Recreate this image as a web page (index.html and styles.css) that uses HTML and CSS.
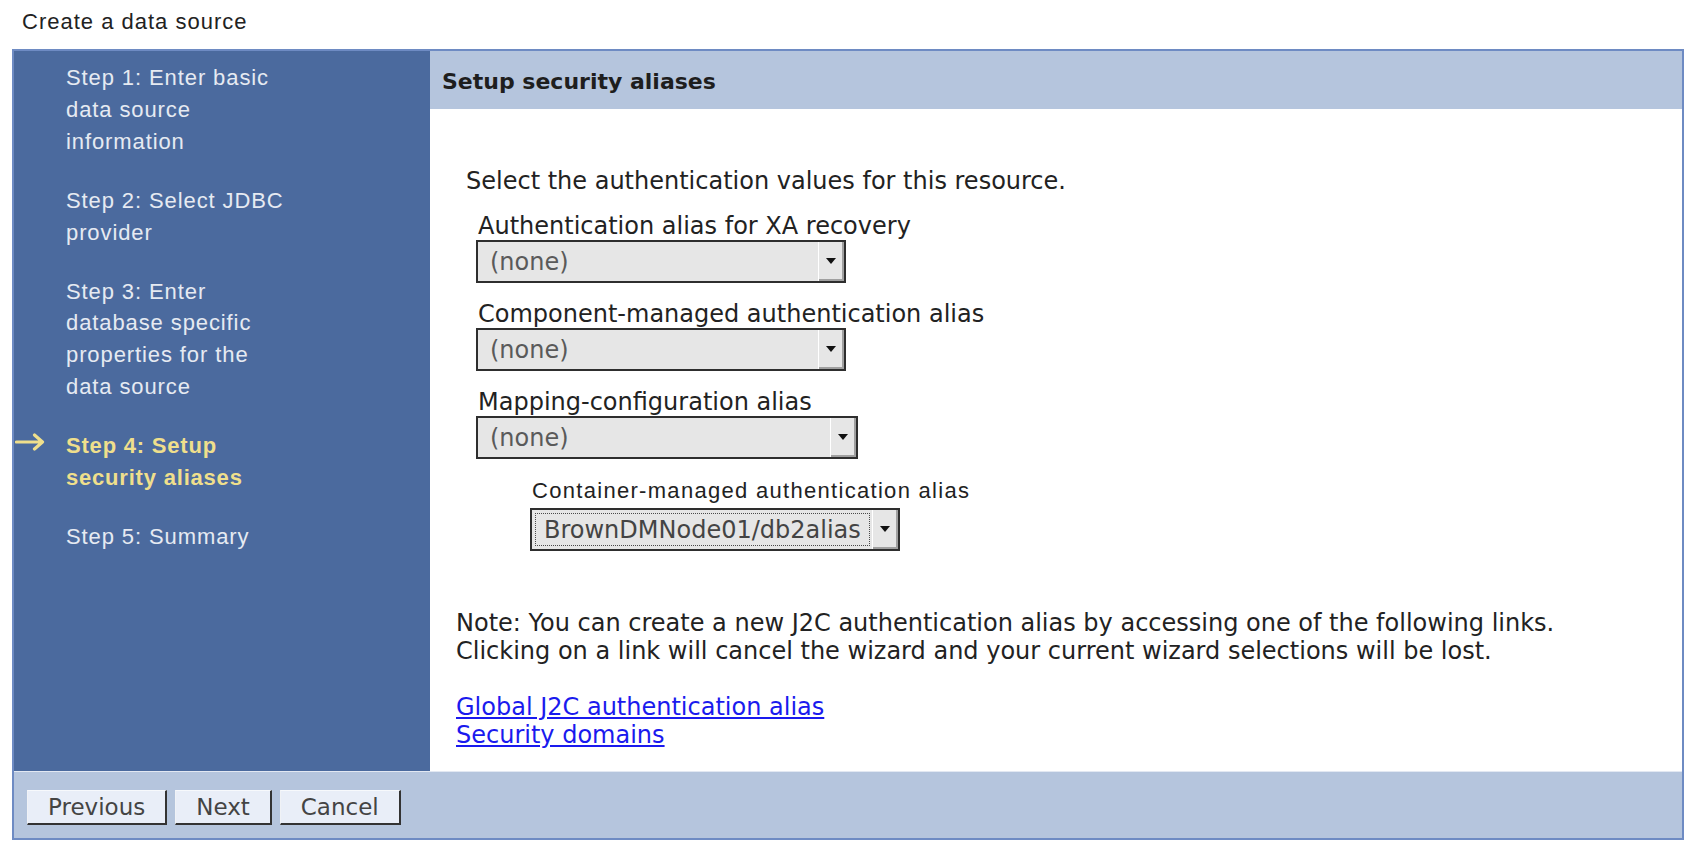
FILE: index.html
```html
<!DOCTYPE html>
<html lang="en">
<head>
<meta charset="utf-8">
<title>Create a data source</title>
<link rel="stylesheet" href="styles.css">
</head>
<body>
<div class="page-title">Create a data source</div>
<div class="wizard">
  <div class="wizard-body">
    <nav class="steps">
      <div class="step"><span class="marker"></span><span class="step-text">Step 1: Enter basic<br>data source<br>information</span></div>
      <div class="step"><span class="marker"></span><span class="step-text">Step 2: Select JDBC<br>provider</span></div>
      <div class="step"><span class="marker"></span><span class="step-text">Step 3: Enter<br>database specific<br>properties for the<br>data source</span></div>
      <div class="step current"><span class="marker"><svg class="arrow" width="30" height="18" viewBox="0 0 30 18"><path d="M1.5 9 H27 M19.5 2 L27.5 9 L19.5 16" fill="none" stroke="#efdf8c" stroke-width="3.2" stroke-linecap="round" stroke-linejoin="round"/></svg></span><span class="step-text">Step 4: Setup<br>security aliases</span></div>
      <div class="step"><span class="marker"></span><span class="step-text">Step 5: Summary</span></div>
    </nav>
    <main class="panel">
      <div class="panel-header">Setup security aliases</div>
      <div class="panel-content">
        <div class="intro">Select the authentication values for this resource.</div>
        <div class="field">
          <div class="field-label">Authentication alias for XA recovery</div>
          <div class="dropdown"><span class="dropdown-value">(none)</span><span class="dropdown-btn"></span></div>
        </div>
        <div class="field">
          <div class="field-label">Component-managed authentication alias</div>
          <div class="dropdown"><span class="dropdown-value">(none)</span><span class="dropdown-btn"></span></div>
        </div>
        <div class="field">
          <div class="field-label">Mapping-configuration alias</div>
          <div class="dropdown wide"><span class="dropdown-value">(none)</span><span class="dropdown-btn"></span></div>
        </div>
        <div class="field nested">
          <div class="field-label sans">Container-managed authentication alias</div>
          <div class="dropdown"><span class="dropdown-value focused">BrownDMNode01/db2alias</span><span class="dropdown-btn"></span></div>
        </div>
        <p class="note">Note: You can create a new J2C authentication alias by accessing one of the following links.<br>Clicking on a link will cancel the wizard and your current wizard selections will be lost.</p>
        <div class="links">
          <a href="#" class="link">Global J2C authentication alias</a>
          <a href="#" class="link">Security domains</a>
        </div>
      </div>
    </main>
  </div>
  <div class="wizard-footer">
    <button class="btn" type="button">Previous</button>
    <button class="btn" type="button">Next</button>
    <button class="btn" type="button">Cancel</button>
  </div>
</div>
</body>
</html>
```
FILE: styles.css
```css
* { box-sizing: border-box; }

body {
  margin: 0;
  background: #ffffff;
  font-family: "DejaVu Sans", sans-serif;
  color: #222222;
}

.page-title {
  font-family: "Liberation Sans", Arial, sans-serif;
  font-size: 22px;
  line-height: 28px;
  letter-spacing: 1px;
  color: #222222;
  padding: 8px 22px 13px;
}

.wizard {
  margin-left: 12px;
  width: 1672px;
  border: 2px solid #6e8bc3;
}

.wizard-body {
  display: flex;
}

.steps {
  width: 416px;
  flex: none;
  background: #4b6a9e;
  padding-top: 11px;
}

.step {
  display: flex;
  margin-bottom: 27px;
  font-family: "Liberation Sans", Arial, sans-serif;
  font-size: 22px;
  line-height: 31.9px;
  letter-spacing: 0.9px;
  color: #e6eaf2;
}

.marker {
  width: 52px;
  flex: none;
  padding-left: 1px;
}

.arrow {
  display: block;
  margin-top: 3px;
}

.step.current .step-text {
  font-weight: bold;
  color: #efdf8c;
  letter-spacing: 0.8px;
}

.panel {
  flex: 1;
  display: flex;
  flex-direction: column;
  min-width: 0;
}

.panel-header {
  background: #b5c5dd;
  font-weight: bold;
  font-size: 22px;
  line-height: 28px;
  padding: 17px 12px 13px;
  color: #1e1e1e;
}

.panel-content {
  flex: 1;
  padding: 58px 0 22px 26px;
  font-size: 24px;
  line-height: 28px;
  color: #222222;
}

.intro {
  margin-left: 10px;
}

.field {
  margin: 15px 0 0 20px;
}

.field-label {
  padding: 2px 0 0 2px;
}

.field.nested {
  margin: 18px 0 0 74px;
}

.field-label.sans {
  font-family: "Liberation Sans", Arial, sans-serif;
  font-size: 22px;
  letter-spacing: 1.3px;
  padding-top: 0;
  margin-bottom: 3px;
}

.dropdown {
  display: flex;
  width: 370px;
  height: 43px;
  border: 2px solid #2e2e2e;
  background: #e6e6e6;
}

.dropdown.wide {
  width: 382px;
}

.dropdown-value {
  flex: 1;
  display: flex;
  align-items: center;
  padding-left: 12px;
  color: #5a5a5a;
  white-space: nowrap;
}

.dropdown-value.focused {
  margin: 3px 2px 3px 3px;
  border: 1px dotted #4a4a4a;
  padding-left: 8px;
  color: #444444;
}

.dropdown-btn {
  width: 26px;
  flex: none;
  background: #e6e6e6;
  border-left: 1px solid #ffffff;
  box-shadow: inset -2px -2px 0 #a0a0a0;
  display: flex;
  align-items: center;
  justify-content: center;
}

.dropdown-btn::before {
  content: "";
  width: 0;
  height: 0;
  border-left: 5px solid transparent;
  border-right: 5px solid transparent;
  border-top: 6px solid #111111;
  margin: 0 1px 1px 0;
}

.note {
  margin: 58px 0 0;
}

.links {
  margin-top: 28px;
}

.link {
  display: block;
  width: max-content;
  color: #1a1aee;
  text-decoration: underline;
}

.wizard-footer {
  display: flex;
  gap: 8px;
  height: 67px;
  padding: 18px 13px 0;
  background: #b5c5dd;
  border-top: 1px solid #e2e8f2;
}

.btn {
  height: 35px;
  padding: 0 20px;
  font-family: "DejaVu Sans", sans-serif;
  font-size: 23px;
  line-height: 30px;
  color: #444444;
  background: #e9eef8;
  border-top: 1px solid #f7f9fc;
  border-left: 1px solid #f0f2f6;
  border-right: 2px solid #333333;
  border-bottom: 2px solid #333333;
  border-radius: 0;
  cursor: pointer;
}
```
